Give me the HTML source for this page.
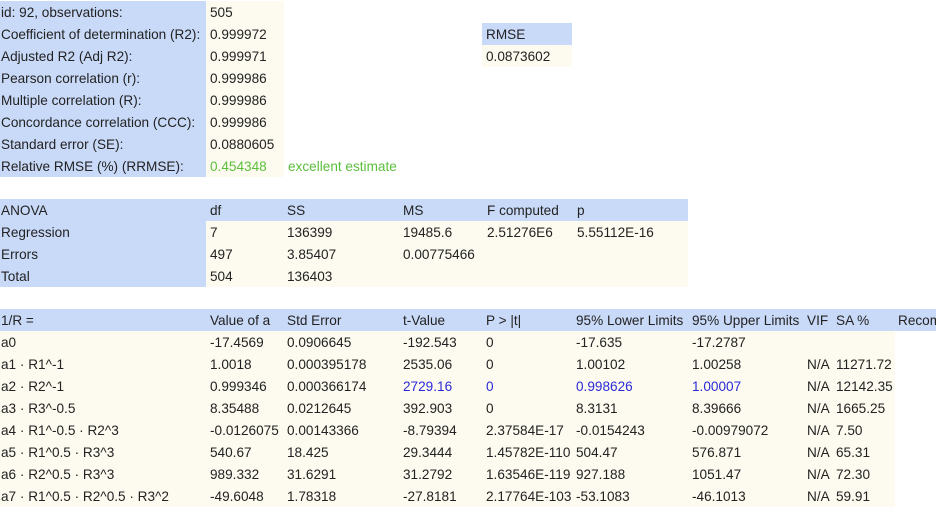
<!DOCTYPE html>
<html><head><meta charset="utf-8"><style>
body{margin:0;width:936px;height:522px;background:#fff;font-family:"Liberation Sans",sans-serif;font-size:13.6px;color:#222;position:relative;overflow:hidden}
.c{position:absolute;height:22px;line-height:24px;white-space:nowrap;padding-left:1px;box-sizing:border-box}
.b{background:#c9daf8}.y{background:#fdfbef}
.g{color:#5cbf3c}.bl{color:#2a2ad6}
</style></head><body>
<div class="c b" style="left:0;top:1px;width:206px;height:176px"></div>
<div class="c y" style="left:206px;top:1px;width:78px;height:176px"></div>
<div class="c" style="left:0;top:1px">id: 92, observations:</div><div class="c" style="left:209px;top:1px">505</div>
<div class="c" style="left:0;top:23px">Coefficient of determination (R2):</div><div class="c" style="left:209px;top:23px">0.999972</div>
<div class="c" style="left:0;top:45px">Adjusted R2 (Adj R2):</div><div class="c" style="left:209px;top:45px">0.999971</div>
<div class="c" style="left:0;top:67px">Pearson correlation (r):</div><div class="c" style="left:209px;top:67px">0.999986</div>
<div class="c" style="left:0;top:89px">Multiple correlation (R):</div><div class="c" style="left:209px;top:89px">0.999986</div>
<div class="c" style="left:0;top:111px">Concordance correlation (CCC):</div><div class="c" style="left:209px;top:111px">0.999986</div>
<div class="c" style="left:0;top:133px">Standard error (SE):</div><div class="c" style="left:209px;top:133px">0.0880605</div>
<div class="c" style="left:0;top:155px">Relative RMSE (%) (RRMSE):</div><div class="c g" style="left:209px;top:155px">0.454348</div><div class="c g" style="left:287px;top:155px">excellent estimate</div>
<div class="c b" style="left:482px;top:23px;width:90px;padding-left:4px">RMSE</div>
<div class="c y" style="left:482px;top:45px;width:90px;padding-left:4px">0.0873602</div>

<div class="c b" style="left:0;top:199px;width:688px"></div>
<div class="c b" style="left:0;top:221px;width:206px;height:66px"></div>
<div class="c y" style="left:206px;top:221px;width:482px;height:66px"></div>
<div class="c" style="left:0;top:199px">ANOVA</div><div class="c" style="left:209px;top:199px">df</div><div class="c" style="left:286px;top:199px">SS</div><div class="c" style="left:402px;top:199px">MS</div><div class="c" style="left:486px;top:199px">F computed</div><div class="c" style="left:576px;top:199px">p</div>
<div class="c" style="left:0;top:221px">Regression</div><div class="c" style="left:209px;top:221px">7</div><div class="c" style="left:286px;top:221px">136399</div><div class="c" style="left:402px;top:221px">19485.6</div><div class="c" style="left:486px;top:221px">2.51276E6</div><div class="c" style="left:576px;top:221px">5.55112E-16</div>
<div class="c" style="left:0;top:243px">Errors</div><div class="c" style="left:209px;top:243px">497</div><div class="c" style="left:286px;top:243px">3.85407</div><div class="c" style="left:402px;top:243px">0.00775466</div>
<div class="c" style="left:0;top:265px">Total</div><div class="c" style="left:209px;top:265px">504</div><div class="c" style="left:286px;top:265px">136403</div>

<div class="c b" style="left:0;top:309px;width:936px"></div>
<div class="c y" style="left:0;top:331px;width:895px;height:176px"></div>
<div id="t"></div>
<script>
var cols=[0,209,286,402,485,575,691,806,835,897];
var rows=[
["1/R =","Value of a","Std Error","t-Value","P > |t|","95% Lower Limits","95% Upper Limits","VIF","SA %","Recom"],
["a0","-17.4569","0.0906645","-192.543","0","-17.635","-17.2787","",""],
["a1 · R1^-1","1.0018","0.000395178","2535.06","0","1.00102","1.00258","N/A","11271.72"],
["a2 · R2^-1","0.999346","0.000366174","2729.16","0","0.998626","1.00007","N/A","12142.35"],
["a3 · R3^-0.5","8.35488","0.0212645","392.903","0","8.3131","8.39666","N/A","1665.25"],
["a4 · R1^-0.5 · R2^3","-0.0126075","0.00143366","-8.79394","2.37584E-17","-0.0154243","-0.00979072","N/A","7.50"],
["a5 · R1^0.5 · R3^3","540.67","18.425","29.3444","1.45782E-110","504.47","576.871","N/A","65.31"],
["a6 · R2^0.5 · R3^3","989.332","31.6291","31.2792","1.63546E-119","927.188","1051.47","N/A","72.30"],
["a7 · R1^0.5 · R2^0.5 · R3^2","-49.6048","1.78318","-27.8181","2.17764E-103","-53.1083","-46.1013","N/A","59.91"]];
var h="";
rows.forEach(function(r,i){r.forEach(function(v,j){if(v==="")return;var bl=(i==3&&j>=3&&j<=6)?" bl":"";h+='<div class="c'+bl+'" style="left:'+cols[j]+'px;top:'+(309+22*i)+'px">'+v.replace(/</g,"&lt;").replace(/>/g,"&gt;")+'</div>';});});
document.getElementById("t").innerHTML=h;
</script>
</body></html>
